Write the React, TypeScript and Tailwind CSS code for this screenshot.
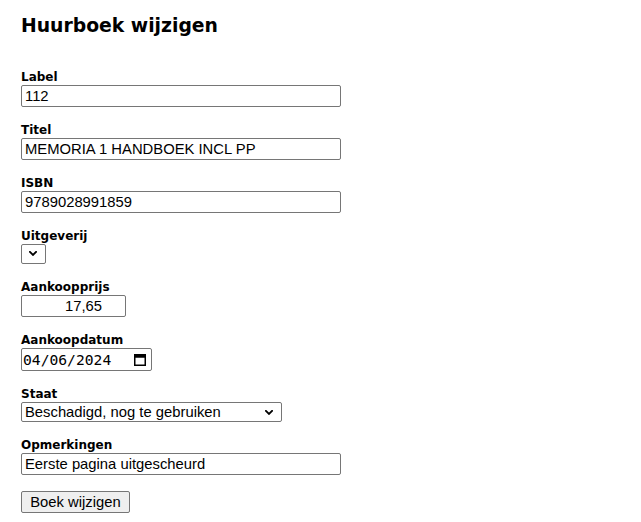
import React from "react";

const labelCls =
  "block text-[12px] leading-[15px] font-bold text-black [font-family:'DejaVu_Sans',Verdana,sans-serif]";
const inputCls =
  "block h-[22px] border border-[#767676] rounded-[2px] bg-white px-[3px] text-[14.8px] text-black [font-family:'Liberation_Sans',Arial,sans-serif] outline-none";

function Chevron() {
  return (
    <svg width="8" height="5" viewBox="0 0 8 5" className="block">
      <path d="M0.9 0.9 L4 3.9 L7.1 0.9" fill="none" stroke="#000" strokeWidth="1.9" strokeLinecap="square" />
    </svg>
  );
}

function CalendarIcon() {
  return (
    <svg width="12" height="13" viewBox="0 0 12 13" className="block">
      <rect x="0.75" y="1.75" width="10.5" height="10.5" fill="none" stroke="#000" strokeWidth="1.5" />
      <rect x="0.75" y="1.75" width="10.5" height="3" fill="#000" />
    </svg>
  );
}

function Field({ label, children }: { label: string; children: React.ReactNode }) {
  return (
    <div className="flex flex-col items-start">
      <label className={labelCls}>{label}</label>
      {children}
    </div>
  );
}

export default function App() {
  return (
    <div className="min-h-[522px] w-[641px] bg-white pl-[21px] pt-[14px] text-black">
      <h2 className="text-[18.8px] leading-[23px] font-bold [font-family:'DejaVu_Sans',Verdana,sans-serif]">
        Huurboek wijzigen
      </h2>
      <form className="mt-[33px] flex flex-col gap-4" onSubmit={(e) => e.preventDefault()}>
        <Field label="Label">
          <input className={`${inputCls} w-[320px]`} defaultValue="112" />
        </Field>
        <Field label="Titel">
          <input className={`${inputCls} w-[320px]`} defaultValue="MEMORIA 1 HANDBOEK INCL PP" />
        </Field>
        <Field label="ISBN">
          <input className={`${inputCls} w-[320px]`} defaultValue="9789028991859" />
        </Field>
        <Field label="Uitgeverij">
          <div className="relative h-[20px] w-[25px]">
            <select className="block h-[20px] w-[25px] appearance-none rounded-[2px] border border-[#767676] bg-white outline-none"></select>
            <div className="pointer-events-none absolute left-[8px] top-[7px]">
              <Chevron />
            </div>
          </div>
        </Field>
        <Field label="Aankoopprijs">
          <input className={`${inputCls} w-[105px] pr-[23px] text-right`} defaultValue="17,65" />
        </Field>
        <Field label="Aankoopdatum">
          <div className="flex h-[23px] w-[131px] items-center rounded-[2px] border border-[#767676] bg-white pl-[1px] pr-[5px]">
            <span className="text-[14.67px] leading-[17px] [font-family:'DejaVu_Sans_Mono',Consolas,monospace]">
              04/06/2024
            </span>
            <span className="ml-auto">
              <CalendarIcon />
            </span>
          </div>
        </Field>
        <Field label="Staat">
          <div className="relative h-[20px] w-[261px]">
            <select
              className="block h-[20px] w-[261px] appearance-none rounded-[2px] border border-[#767676] bg-white pl-[3px] text-[14.8px] leading-[16px] text-black outline-none [font-family:'Liberation_Sans',Arial,sans-serif]"
              defaultValue="b"
            >
              <option value="b">Beschadigd, nog te gebruiken</option>
            </select>
            <div className="pointer-events-none absolute right-[9px] top-[8px]">
              <Chevron />
            </div>
          </div>
        </Field>
        <Field label="Opmerkingen">
          <input className={`${inputCls} w-[320px]`} defaultValue="Eerste pagina uitgescheurd" />
        </Field>
        <div>
          <button
            type="submit"
            className="block h-[22px] w-[109px] rounded-[2px] border border-[#767676] bg-[#efefef] text-center text-[14.8px] leading-[16px] text-black [font-family:'Liberation_Sans',Arial,sans-serif]"
          >
            Boek wijzigen
          </button>
        </div>
      </form>
    </div>
  );
}
